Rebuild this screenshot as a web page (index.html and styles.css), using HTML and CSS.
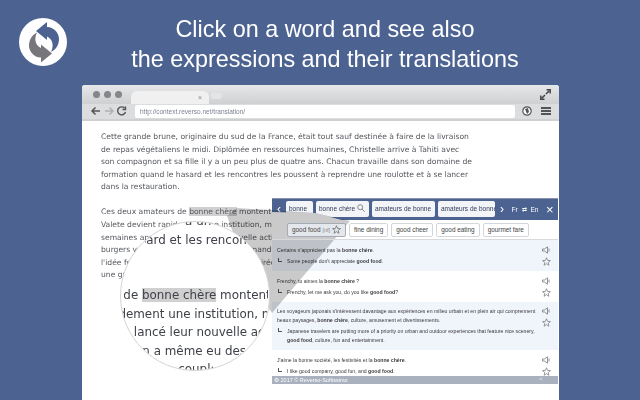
FILE: index.html
```html
<!DOCTYPE html>
<html lang="en">
<head>
    <meta charset="UTF-8">
    <title>Reverso Context</title>
    <link rel="stylesheet" href="styles.css">
</head>
<body>
    <header class="banner">
        <svg class="logo" width="48" height="48" viewBox="0 0 48 48">
            <circle cx="24" cy="24" r="24" fill="#fff"/>
            <path d="M17 13 L28 4 V9 C36 9 42 17 39.5 25 C38.5 29 36 32 32 34 C35 28 34 21 28 18.5 V22 Z" fill="#4c6391"/>
            <path d="M17 13 L28 4 V9 C36 9 42 17 39.5 25 C38.5 29 36 32 32 34 C35 28 34 21 28 18.5 V22 Z" fill="#77777b" transform="rotate(180 25 24.2)"/>
        </svg>
        <h1>Click on a word and see also<br>the expressions and their translations</h1>
    </header>

    <div class="browser">
        <div class="titlebar">
            <span class="dot"></span><span class="dot"></span><span class="dot"></span>
            <div class="tab">×</div>
            <div class="newtab"></div>
            <svg class="expand" width="11" height="11" viewBox="0 0 11 11">
                <path d="M6 5 L9 2 M6.5 .8 H10.2 V4.5 M5 6 L2 9 M.8 6.5 V10.2 H4.5" fill="none" stroke="#444" stroke-width="1.5"/>
            </svg>
        </div>
        <div class="toolbar">
            <svg width="42" height="12" viewBox="0 0 42 12">
                <path d="M10 6 H2 M5.5 2.5 L2 6 L5.5 9.5" fill="none" stroke="#555" stroke-width="1.5"/>
                <path d="M15 6 H23 M19.5 2.5 L23 6 L19.5 9.5" fill="none" stroke="#aeb0b4" stroke-width="1.5"/>
                <path d="M34.5 3 A4 4 0 1 0 35.5 7 M35.5 1.5 V4.5 H32.5" fill="none" stroke="#555" stroke-width="1.4"/>
            </svg>
            <div class="urlbar">http://context.reverso.net/translation/</div>
            <svg class="ext" width="10" height="10" viewBox="0 0 10 10">
                <circle cx="5" cy="5" r="4.2" fill="#fff" stroke="#555" stroke-width="1.2"/>
                <path d="M3 3 L6 2 L7 6 L5 8Z" fill="#555"/>
            </svg>
            <div class="menu"></div>
        </div>

        <div class="page">
            <p>Cette grande brune, originaire du sud de la France, était tout sauf destinée à faire de la livraison<br>de repas végétaliens le midi. Diplômée en ressources humaines, Christelle arrive à Tahiti avec<br>son compagnon et sa fille il y a un peu plus de quatre ans. Chacun travaille dans son domaine de<br>formation quand le hasard et les rencontres les poussent à reprendre une roulotte et à se lancer<br>dans la restauration.</p>
            <p>Ces deux amateurs de <span class="hit">bonne chère</span> montent l<br>Valete devient rapidement une institution, ma<br>semaines après avoir lancé leur nouvelle acti<br>burgers végétaliens a même eu des demandes<br>l'idée folle de ce couple le temps d'une soirée<br>une grande aventure</p>
        </div>

        <aside class="panel">
            <div class="panel-head">
                <span class="nav">‹</span>
                <span class="word w1">bonne</span>
                <span class="word w2">bonne chère
                    <svg width="8" height="8" viewBox="0 0 8 8"><circle cx="3.2" cy="3.2" r="2.5" fill="none" stroke="#888"/><path d="M5 5 L7.6 7.6" stroke="#888"/></svg>
                </span>
                <span class="word w3">amateurs de bonne</span>
                <span class="word w4">amateurs de bonne</span>
                <span class="nav">›</span>
                <span class="lang">Fr</span>
                <span class="lang swap">⇄</span>
                <span class="lang">En</span>
                <span class="close">×</span>
            </div>
            <div class="panel-chips">
                <span class="chip on">good food <i>[nf]</i>
                    <svg class="star" width="9" height="9" viewBox="0 0 10 10"><path d="M5 .8 L6.2 3.8 L9.4 4 L6.9 6 L7.7 9.2 L5 7.4 L2.3 9.2 L3.1 6 L.6 4 L3.8 3.8Z" fill="none" stroke="#666" stroke-width=".8"/></svg>
                </span>
                <span class="chip">fine dining</span>
                <span class="chip">good cheer</span>
                <span class="chip">good eating</span>
                <span class="chip">gourmet fare</span>
            </div>
            <ul class="results">
                <li class="tint">
                    <div class="texts">
                        <p>Certains n'apprécient pas la <b>bonne chère</b>.</p>
                        <p class="tr">Some people don't appreciate <b>good food</b>.</p>
                    </div>
                    <div class="acts"><svg class="spk" width="9" height="8" viewBox="0 0 9 8"><path d="M.5 3 H2.5 L5.5 .8 V7.2 L2.5 5 H.5Z M7 2.5 V5.5" fill="none" stroke="#777" stroke-width=".8"/></svg><svg class="star" width="9" height="9" viewBox="0 0 10 10"><path d="M5 .8 L6.2 3.8 L9.4 4 L6.9 6 L7.7 9.2 L5 7.4 L2.3 9.2 L3.1 6 L.6 4 L3.8 3.8Z" fill="none" stroke="#777" stroke-width=".8"/></svg></div>
                </li>
                <li>
                    <div class="texts">
                        <p>Frenchy, tu aimes la <b>bonne chère</b> ?</p>
                        <p class="tr">Frenchy, let me ask you, do you like <b>good food</b>?</p>
                    </div>
                    <div class="acts"><svg class="spk" width="9" height="8" viewBox="0 0 9 8"><path d="M.5 3 H2.5 L5.5 .8 V7.2 L2.5 5 H.5Z M7 2.5 V5.5" fill="none" stroke="#777" stroke-width=".8"/></svg><svg class="star" width="9" height="9" viewBox="0 0 10 10"><path d="M5 .8 L6.2 3.8 L9.4 4 L6.9 6 L7.7 9.2 L5 7.4 L2.3 9.2 L3.1 6 L.6 4 L3.8 3.8Z" fill="none" stroke="#777" stroke-width=".8"/></svg></div>
                </li>
                <li class="tint tall">
                    <div class="texts">
                        <p>Les voyageurs japonais s'intéressent davantage aux expériences en milieu urbain et en plein air qui comprennent beaux paysages, <b>bonne chère</b>, culture, amusement et divertissements.</p>
                        <p class="tr">Japanese travelers are putting more of a priority on urban and outdoor experiences that feature nice scenery, <b>good food</b>, culture, fun and entertainment.</p>
                    </div>
                    <div class="acts"><svg class="spk" width="9" height="8" viewBox="0 0 9 8"><path d="M.5 3 H2.5 L5.5 .8 V7.2 L2.5 5 H.5Z M7 2.5 V5.5" fill="none" stroke="#777" stroke-width=".8"/></svg><svg class="star" width="9" height="9" viewBox="0 0 10 10"><path d="M5 .8 L6.2 3.8 L9.4 4 L6.9 6 L7.7 9.2 L5 7.4 L2.3 9.2 L3.1 6 L.6 4 L3.8 3.8Z" fill="none" stroke="#777" stroke-width=".8"/></svg></div>
                </li>
                <li class="last">
                    <div class="texts">
                        <p>J'aime la bonne société, les festivités et la <b>bonne chère</b>.</p>
                        <p class="tr">I like good company, good fun, and <b>good food</b>.</p>
                    </div>
                    <div class="acts"><svg class="spk" width="9" height="8" viewBox="0 0 9 8"><path d="M.5 3 H2.5 L5.5 .8 V7.2 L2.5 5 H.5Z M7 2.5 V5.5" fill="none" stroke="#777" stroke-width=".8"/></svg><svg class="star" width="9" height="9" viewBox="0 0 10 10"><path d="M5 .8 L6.2 3.8 L9.4 4 L6.9 6 L7.7 9.2 L5 7.4 L2.3 9.2 L3.1 6 L.6 4 L3.8 3.8Z" fill="none" stroke="#777" stroke-width=".8"/></svg></div>
                </li>
            </ul>
            <div class="panel-foot"><span>⚙ 2017 © Reverso-Softissimo</span><span>^</span></div>
        </aside>

        <!-- grey beam from the word to the lens, coordinates are relative to .browser -->
        <svg class="beam" width="477" height="315" viewBox="0 0 477 315">
            <path d="M155 123 L233 128 L268 136 L190 228 L170 200 L145 131Z"/>
        </svg>
        <svg class="beam-head" width="477" height="315" viewBox="0 0 477 315">
            <path d="M190 127 L233 128 L260 135 L190 135Z"/>
        </svg>

        <div class="lens">
            <div class="lens-text">
                <div class="row r1">son compagnon et sa fille il y a un peu plus</div>
                <div class="row r2">formation quand le hasard et les rencontres</div>
                <div class="row r3">&nbsp;</div>
                <div class="row r3">&nbsp;</div>
                <div class="row r5">Ces deux amateurs de <span class="lens-hit">bonne chère</span> montent l</div>
                <div class="row r6">Valete devient rapidement une institution, mais</div>
                <div class="row r7">semaines après avoir lancé leur nouvelle activité</div>
                <div class="row r8">burgers végétaliens on a même eu des demandes</div>
                <div class="row r9">l'idée folle de ce couple le temps</div>
            </div>
        </div>
    </div>
</body>
</html>
```

FILE: styles.css
```css
body {
    margin: 0;
    width: 640px;
    height: 400px;
    overflow: hidden;
    background-color: #4c6391;
    font-family: "Liberation Sans", Arial, sans-serif;
}

.banner {
    height: 85px;
    position: relative;
}

.logo {
    position: absolute;
    left: 19px;
    top: 18px;
}

h1 {
    margin: 0;
    padding: 14px 0 0 10px;
    text-align: center;
    color: #fff;
    font-weight: normal;
    font-size: 23.4px;
    line-height: 30px;
}

.browser {
    position: relative;
    margin-left: 82px;
    width: 477px;
    height: 315px;
    overflow: hidden;
    background: #fff;
    border-radius: 3px 3px 0 0;
}

.titlebar {
    height: 19px;
    display: flex;
    align-items: center;
    padding-left: 11px;
    background: linear-gradient(#e6e7e8, #cfd0d2);
    box-sizing: border-box;
}

.dot {
    width: 7px;
    height: 7px;
    margin-right: 4px;
    border-radius: 50%;
    background: #85868a;
}

.tab {
    width: 78px;
    height: 13px;
    margin: 6px 0 0 5px;
    padding-right: 7px;
    box-sizing: border-box;
    background: #f0f0f1;
    border-radius: 6px 6px 0 0;
    color: #888;
    font-size: 7px;
    line-height: 13px;
    text-align: right;
}

.newtab {
    width: 11px;
    height: 6px;
    margin: 2px 0 0 2px;
    background: #e3e4e5;
    border-radius: 2px;
}

.expand {
    margin-left: auto;
    margin-right: 8px;
}

.toolbar {
    height: 17px;
    display: flex;
    align-items: center;
    padding: 0 6px 1px 8px;
    box-sizing: border-box;
    background: #dcddde;
    border-bottom: 2px solid #cfd0d0;
}

.urlbar {
    width: 380px;
    height: 13px;
    margin-left: 3px;
    padding-left: 5px;
    box-sizing: border-box;
    background: #fff;
    border-radius: 2px;
    color: #7c8294;
    font-size: 6.5px;
    line-height: 13px;
}

.ext {
    margin-left: 7px;
}

.menu {
    width: 10px;
    height: 4px;
    margin-left: 9px;
    border-top: 2px solid #555;
    border-bottom: 2px solid #555;
    background: linear-gradient(#555, #555) center / 100% 2px no-repeat;
}

.page {
    padding: 10px 0 0 19px;
    color: #55585e;
    font-family: "DejaVu Sans", Verdana, sans-serif;
    font-size: 7.6px;
    line-height: 12.6px;
    white-space: nowrap;
}

.page p {
    margin: 0 0 12.5px;
}

.hit {
    background: #d0d0d0;
}

/* translation popup */
.panel {
    position: absolute;
    left: 190px;
    top: 113px;
    width: 286px;
    height: 202px;
    background: #fff;
    color: #3a3a3a;
    display: flex;
    flex-direction: column;
    font-size: 5.15px;
}

.panel-head {
    height: 22px;
    box-sizing: border-box;
    border-top: 1px solid #8793ad;
    display: flex;
    align-items: center;
    background: #4c6391;
    color: #fff;
    font-size: 6.5px;
    white-space: nowrap;
    overflow: hidden;
}

.nav {
    width: 14px;
    flex: none;
    text-align: center;
    font-size: 12px;
}

.word {
    flex: none;
    height: 16px;
    margin-right: 3px;
    box-sizing: border-box;
    padding-left: 3px;
    background: #f2f4f8;
    border-radius: 2px;
    color: #2c3a55;
    line-height: 16px;
    overflow: hidden;
}

.w1 { width: 27px; }
.w2 { width: 53px; }
.w3 { width: 63px; }
.w4 { width: 57px; margin-right: 0; }

.w2 svg {
    vertical-align: -1px;
}

.lang {
    margin-left: 1px;
    width: 9px;
    text-align: center;
}

.swap {
    font-size: 6px;
}

.close {
    margin-left: 7px;
    font-size: 13px;
    line-height: 13px;
}

.panel-chips {
    position: relative;
    z-index: 3;
    height: 21px;
    box-sizing: border-box;
    padding: 3px 0 0 15px;
    display: flex;
    gap: 3px;
    border-bottom: 1px solid #d8dadd;
}

.chip {
    height: 14px;
    box-sizing: border-box;
    padding: 0 4px;
    display: flex;
    align-items: center;
    gap: 2px;
    background: #fff;
    border: 1px solid #d3d6da;
    border-radius: 2px;
    color: #444;
    font-size: 6.4px;
    white-space: nowrap;
}

.chip.on {
    background: #e4e7ec;
    border-color: #a5abb5;
}

.chip i {
    font-style: normal;
    font-size: 5.5px;
    color: #888;
}

.results {
    margin: 0;
    padding: 0;
    list-style: none;
    flex: 1;
}

.results li {
    display: flex;
    height: 31px;
    box-sizing: border-box;
    padding: 6px 7px 0 5px;
    justify-content: space-between;
}

.results li.tint {
    background: #f0f4fb;
}

.results li.tall {
    height: 48px;
    padding-top: 5px;
}

.results li.last {
    height: 26px;
}

.results p {
    margin: 0;
    line-height: 9px;
}

.texts {
    width: 262px;
}

.results p.tr {
    position: relative;
    margin-top: 2px;
    padding-left: 10px;
}

.results p.tr::before {
    content: "";
    position: absolute;
    left: 1px;
    top: 1px;
    width: 3px;
    height: 3px;
    border-left: 1px solid #555;
    border-bottom: 1px solid #555;
}

.acts {
    display: flex;
    flex-direction: column;
    align-items: center;
    gap: 3px;
}

.panel-foot {
    height: 8px;
    padding: 0 16px 0 2px;
    display: flex;
    justify-content: space-between;
    align-items: center;
    background: #a9b1bf;
    color: #fff;
    font-size: 5.5px;
    margin-bottom: 16px;
}

/* beam and lens sit over the page */
.beam,
.beam-head {
    position: absolute;
    left: 0;
    top: 0;
    fill: #cacaca;
    pointer-events: none;
}

.beam {
    mix-blend-mode: multiply;
}

.lens {
    position: absolute;
    z-index: 4;
    left: 38px;
    top: 136px;
    width: 150px;
    height: 150px;
    box-sizing: border-box;
    border: 1px solid #d4d4d4;
    border-radius: 50%;
    background: #fff;
    overflow: hidden;
}

.lens-text {
    margin: -10px 0 0 -105px;
    color: #3e4148;
    font-family: "DejaVu Sans", Verdana, sans-serif;
    font-size: 11.9px;
    line-height: 18.5px;
    white-space: nowrap;
}

.row {
    width: 300px;
}

/* the lens only shows part of each row: shift the row, then clip it */
.r1 { margin-left: -9px; clip-path: inset(0 94px 0 176px); }
.r2 { margin-left: -8px; clip-path: inset(0 61px 0 137px); }
.r5 { margin-left: -12px; clip-path: inset(0 36px 0 120px); }
.r6 { margin-left: -10px; clip-path: inset(0 38px 0 114px); }
.r7 { margin-left: -13px; clip-path: inset(0 41px 0 129px); }
.r8 { margin-left: -3px; clip-path: inset(0 66px 0 129px); }
.r9 { margin-left: 61px; clip-path: inset(0 164px 0 98px); }

.lens-hit {
    background: #d0d0d0;
}
```
